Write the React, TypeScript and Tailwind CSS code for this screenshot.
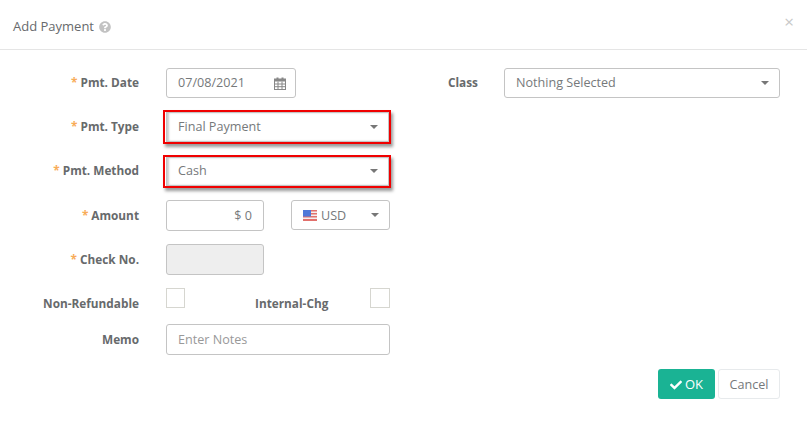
import type { ReactNode } from "react";
import { FaCheck, FaQuestionCircle } from "react-icons/fa";

function Caret() {
  return <span className="h-0 w-0 border-x-[4px] border-t-[4px] border-x-transparent border-t-[#777]" />;
}

function Label({ text, required, className = "" }: { text: string; required?: boolean; className?: string }) {
  return (
    <label className={`-translate-y-px whitespace-nowrap text-[11.8px] font-bold leading-[16px] text-[#676a6c] ${className}`}>
      {required ? <span className="mr-[3px] text-[#f8ac59]">*</span> : null}
      {text}
    </label>
  );
}

function Row({ label, required, className, children }: { label: string; required?: boolean; className: string; children: ReactNode }) {
  return (
    <div className={`flex ${className}`}>
      <Label text={label} required={required} className="w-[139px] shrink-0 text-right" />
      <div className="ml-[27px] flex">{children}</div>
    </div>
  );
}

function Select({ value, className }: { value: string; className: string }) {
  return (
    <div className={`flex items-center justify-between rounded-[3px] border border-[#c4c4c4] bg-white pl-[11px] pr-[10px] text-[12.6px] text-[#76797b] ${className}`}>
      <span>{value}</span>
      <Caret />
    </div>
  );
}

// the red annotation box drawn round a field in the screenshot
function Highlight({ value, className }: { value: string; className: string }) {
  return (
    <div className={`-ml-[3px] flex w-[228px] items-center border-2 border-[#f00000] pl-[1px] shadow-[2px_3px_3px_rgba(0,0,0,0.4)] ${className}`}>
      <Select value={value} className="h-full w-[223px] rounded-none shadow-[inset_2px_0_2px_rgba(0,0,0,0.2)]" />
    </div>
  );
}

function CalendarIcon() {
  return (
    <svg width="12" height="13" viewBox="0 0 12 13" className="text-[#888]">
      <rect x="0.5" y="2" width="11" height="10.5" fill="none" stroke="currentColor" />
      <rect x="0" y="2" width="12" height="2.5" fill="currentColor" />
      <rect x="2.5" y="0.5" width="2" height="3" fill="currentColor" />
      <rect x="7.5" y="0.5" width="2" height="3" fill="currentColor" />
      <path d="M4 4.5V12M8 4.5V12M1 7H11M1 9.7H11" stroke="currentColor" strokeWidth="1" fill="none" />
    </svg>
  );
}

function UsFlag() {
  return (
    <svg width="14" height="11" viewBox="0 0 14 11" className="mr-[4px]">
      <rect width="14" height="11" fill="#f3eeee" />
      <rect y="0" width="14" height="1.5" fill="#e2706c" />
      <rect y="3" width="14" height="1.5" fill="#e2706c" />
      <rect y="6" width="14" height="1.5" fill="#e2706c" />
      <rect y="9" width="14" height="2" fill="#e2706c" />
      <rect width="8" height="6.5" fill="#4f78d8" />
    </svg>
  );
}

export default function App() {
  return (
    <div className="relative h-[426px] w-[807px] overflow-hidden bg-white font-['Open_Sans',sans-serif]">
      <header className="flex h-[50px] items-center border-b border-[#e5e5e5] pt-[5px] pl-[13px]">
        <h4 className="text-[13px] font-normal text-[#676a6c]">Add Payment</h4>
        <FaQuestionCircle size={12} className="ml-[5px] text-[#c2c2c2]" />
        <span className="absolute right-[13px] top-[13px] text-[17px] leading-[18px] text-[#c8c8c8]">×</span>
      </header>

      <div className="flex pt-[18px]">
        <div className="w-[390px] shrink-0">
          <Row label="Pmt. Date" required className="h-[30px] items-center">
            <div className="flex h-[30px] w-[130px] items-center justify-between rounded-[3px] border border-[#c4c4c4] pl-[11px] pr-[9px] text-[12.6px] text-[#76797b]">
              <span>07/08/2021</span>
              <CalendarIcon />
            </div>
          </Row>
          <Row label="Pmt. Type" required className="mt-[14px] h-[30px] items-center">
            <Highlight value="Final Payment" className="h-[34px]" />
          </Row>
          <Row label="Pmt. Method" required className="mt-[14px] h-[30px] items-center">
            <Highlight value="Cash" className="h-[33px]" />
          </Row>
          <Row label="Amount" required className="mt-[14px] h-[31px] items-center">
            <div className="flex h-[31px] w-[98px] items-center justify-end rounded-[3px] border border-[#c4c4c4] pr-[11px] pt-[1px] text-[12.6px] text-[#76797b]">$ 0</div>
            <div className="ml-[27px] flex h-[30px] w-[99px] items-center justify-between rounded-[3px] border border-[#c4c4c4] pl-[11px] pr-[10px] text-[12.6px] text-[#76797b]">
              <span className="flex items-center pt-[2px]">
                <UsFlag />
                USD
              </span>
              <Caret />
            </div>
          </Row>
          <Row label="Check No." required className="mt-[13px] h-[31px] items-center">
            <div className="h-[31px] w-[98px] rounded-[3px] border border-[#c4c4c4] bg-[#eeeeee]" />
          </Row>
          <div className="mt-[13px] flex h-[20px]">
            <Label text="Non-Refundable" className="mt-[8px] w-[139px] shrink-0 text-right" />
            <span className="ml-[27px] h-[20px] w-[19px] border border-[#d6d6d0]" />
            <Label text="Internal-Chg" className="ml-[70px] mt-[8px] w-[72px]" />
            <span className="ml-[43px] h-[20px] w-[20px] border border-[#d6d6d0]" />
          </div>
          <Row label="Memo" className="mt-[16px] h-[31px] items-center">
            <div className="flex h-[31px] w-[224px] items-center rounded-[3px] border border-[#c4c4c4] pl-[11px] pt-[1px] text-[12.6px] text-[#999]">Enter Notes</div>
          </Row>
        </div>

        <div className="flex h-[30px] items-center">
          <Label text="Class" className="ml-[58px] w-[56px]" />
          <Select value="Nothing Selected" className="h-[30px] w-[276px]" />
        </div>
      </div>

      <footer className="mr-[27px] mt-[14px] flex justify-end">
        <button type="button" className="flex h-[30px] w-[57px] items-center justify-center rounded-[3px] bg-[#1ab394] pt-[1px] text-[13px] text-white">
          <FaCheck size={12} className="mr-[3px]" />
          OK
        </button>
        <button type="button" className="ml-[3px] h-[30px] w-[62px] rounded-[3px] border border-[#e7eaec] bg-white pt-[2px] text-[12.6px] text-[#76797b]">Cancel</button>
      </footer>
    </div>
  );
}
